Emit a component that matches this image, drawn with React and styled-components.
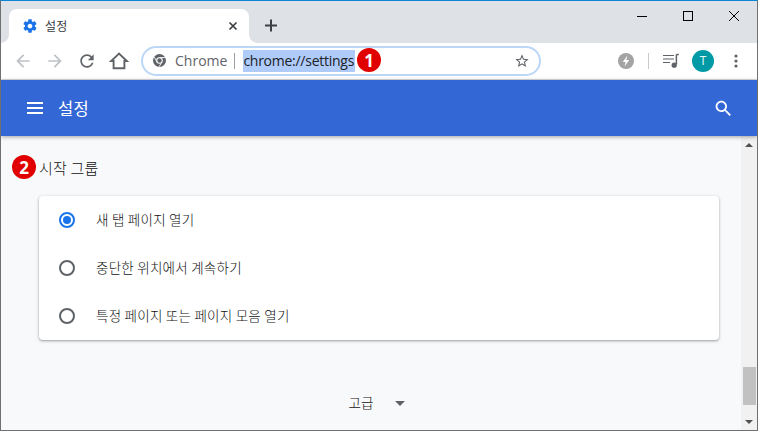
import React from 'react';
import styled, { createGlobalStyle } from 'styled-components';

const KO = `"Noto Sans CJK KR", "Noto Sans", sans-serif`;
const Global = createGlobalStyle`
  html, body { margin: 0; padding: 0; background: #f8f9fa; overflow: hidden; }
  * { box-sizing: border-box; }
`;

const Win = styled.div`
  position: relative; width: 758px; height: 431px; display: flex; flex-direction: column;
  border-top: 1px solid #0b84d8; border-left: 1px solid #707070; border-right: 1px solid #707070; border-bottom: 1px solid #707070;
  font-family: ${KO}; overflow: hidden; background: #f8f9fa;
`;
const TitleBar = styled.div`
  height: 42px; flex: none; background: #dee1e6; display: flex; align-items: flex-end; padding-left: 8px;
`;
const Tab = styled.div`
  position: relative; width: 240px; height: 34px; background: #fff; border-radius: 8px 8px 0 0;
  display: flex; align-items: center; padding: 0 11px 0 13px; color: #3c4043; font-size: 12px;
  &::before, &::after { content: ''; position: absolute; bottom: 0; width: 8px; height: 8px; }
  &::before { left: -8px; background: radial-gradient(circle at 0 0, #dee1e6 7.5px, #fff 8px); }
  &::after { right: -8px; background: radial-gradient(circle at 100% 0, #dee1e6 7.5px, #fff 8px); }
`;
const TabLabel = styled.span` margin-left: 7px; flex: 1; letter-spacing: .3px; position: relative; top: -1px; `;
const NewTab = styled.div` margin: 0 0 8px 13px; width: 18px; height: 18px; display: flex; `;
const WinControls = styled.div` margin-left: auto; align-self: flex-start; display: flex; height: 30px; align-items: center; `;
const WinBtn = styled.div` width: 46px; height: 30px; display: flex; align-items: center; justify-content: center; `;

const Toolbar = styled.div`
  height: 37px; flex: none; background: #fff; border-bottom: 1px solid #dadce0; display: flex; align-items: center; padding: 0 0 1px 6px;
`;
const NavBtn = styled.div` width: 32px; height: 32px; display: flex; align-items: center; justify-content: center; color: ${p => (p.$off ? '#bdc1c6' : '#5f6368')}; `;
const Omnibox = styled.div`
  width: 400px; height: 30px; margin-left: 6px; border: 2px solid #bcd6f7; border-radius: 15px; display: flex; align-items: center; padding: 0 9px 0 10px;
  font-family: "Open Sans", sans-serif; font-size: 14px; color: #5f6368;
`;
const Sep = styled.span` width: 1px; height: 16px; background: #9aa0a6; margin: 0 8px 0 7px; `;
const Url = styled.span` background: #aecbfa; color: #202124; height: 22px; line-height: 21px; padding: 0 1px 0 0; font-size: 14px; letter-spacing: -.26px; `;
const Chromeword = styled.span` margin-left: 9px; `;
const Grow = styled.span` flex: 1; `;
const Right = styled.div` display: flex; align-items: center; margin-left: auto; padding-right: 19px; `;
const ToolSep = styled.span` width: 1px; height: 16px; background: #c8cacd; margin: 0 14px; `;
const Avatar = styled.div`
  width: 22px; height: 22px; border-radius: 50%; background: #009aa6; color: #e6f7f8; font: 500 12px "Open Sans", sans-serif;
  display: flex; align-items: center; justify-content: center; margin: 0 20px 0 13px;
`;

const Header = styled.div`
  height: 56px; flex: none; background: #3367d6; color: #fff; display: flex; align-items: center; padding: 0 23px 0 25px; position: relative;
  box-shadow: 0 1px 4px rgba(0,0,0,.35); z-index: 2;
`;
const HeaderTitle = styled.div` font-size: 16.5px; margin-left: 14px; letter-spacing: .3px; `;

const Body = styled.div` flex: 1; display: flex; min-height: 0; `;
const Main = styled.div` flex: 1; background: #f8f9fa; padding: 19px 22px 0 38px; display: flex; flex-direction: column; `;
const Heading = styled.div` font-size: 15px; line-height: 26px; color: #111; letter-spacing: .2px; font-weight: 300; `;
const Card = styled.div`
  margin-top: 15px; height: 144px; background: #fff; border-radius: 4px;
  box-shadow: 0 1px 2px rgba(60,64,67,.35), 0 1px 3px 1px rgba(60,64,67,.12);
  display: flex; flex-direction: column;
`;
const Row = styled.div` height: 48px; display: flex; align-items: center; padding-left: 20px; font-size: 13.5px; color: #111; letter-spacing: .25px; font-weight: 300; line-height: 20px; `;
const RowText = styled.span` position: relative; top: -1px; `;
const Radio = styled.span`
  width: 16px; height: 16px; border-radius: 50%; flex: none; margin-right: 21px;
  border: 2px solid ${p => (p.$on ? '#1a73e8' : '#5f6368')};
  display: flex; align-items: center; justify-content: center;
  &::after { content: ''; width: 8px; height: 8px; border-radius: 50%; background: ${p => (p.$on ? '#1a73e8' : 'transparent')}; }
`;
const Advanced = styled.div` margin-top: 52px; display: flex; align-items: center; justify-content: center; font-size: 13.5px; font-weight: 300; color: #111; gap: 22px; padding-right: 4px; `;
const Caret = styled.span` width: 0; height: 0; border: 5px solid transparent; border-top-color: #5f6368; border-bottom: 0; margin-top: 2px; `;

const Scrollbar = styled.div` width: 16px; flex: none; background: #f1f1f1; display: flex; flex-direction: column; align-items: center; padding-top: 7px; position: relative; `;
const ArrowUp = styled.span` width: 0; height: 0; border: 4px solid transparent; border-bottom: 4px solid #505050; border-top: 0; `;
const ArrowDown = styled.span` width: 0; height: 0; border: 4px solid transparent; border-top: 4px solid #505050; border-bottom: 0; margin-top: 15px; `;
const Thumb = styled.div` width: 13px; height: 38px; background: #c1c1c1; margin-top: 220px; `;

const Badge = styled.div`
  position: absolute; width: 24px; height: 24px; border-radius: 50%; background: #e00000; color: #fff; z-index: 5;
  left: ${p => p.$x}px; top: ${p => p.$y}px; font: 700 17px "Open Sans", sans-serif; display: flex; align-items: center; justify-content: center;
`;

const Mi = ({ d, size = 20, color = 'currentColor' }) => (
  <svg width={size} height={size} viewBox="0 0 24 24" fill={color}><path d={d} /></svg>
);
const gear = 'M19.43 12.98c.04-.32.07-.64.07-.98s-.03-.66-.07-.98l2.11-1.65c.19-.15.24-.42.12-.64l-2-3.46c-.12-.22-.39-.3-.61-.22l-2.49 1c-.52-.4-1.08-.73-1.69-.98l-.38-2.65C14.46 2.18 14.25 2 14 2h-4c-.25 0-.46.18-.49.42l-.38 2.65c-.61.25-1.17.59-1.69.98l-2.49-1c-.23-.09-.49 0-.61.22l-2 3.46c-.13.22-.07.49.12.64l2.11 1.65c-.04.32-.07.65-.07.98s.03.66.07.98l-2.11 1.65c-.19.15-.24.42-.12.64l2 3.46c.12.22.39.3.61.22l2.49-1c.52.4 1.08.73 1.69.98l.38 2.65c.03.24.24.42.49.42h4c.25 0 .46-.18.49-.42l.38-2.65c.61-.25 1.17-.59 1.69-.98l2.49 1c.23.09.49 0 .61-.22l2-3.46c.12-.22.07-.49-.12-.64l-2.11-1.65zM12 15.5c-1.93 0-3.5-1.57-3.5-3.5s1.57-3.5 3.5-3.5 3.5 1.57 3.5 3.5-1.57 3.5-3.5 3.5z';
const back = 'M20 11H7.83l5.59-5.59L12 4l-8 8 8 8 1.41-1.41L7.83 13H20v-2z';
const forward = 'M12 4l-1.41 1.41L16.17 11H4v2h12.17l-5.58 5.59L12 20l8-8z';
const reload = 'M17.65 6.35C16.2 4.9 14.21 4 12 4c-4.42 0-7.99 3.58-7.99 8s3.57 8 7.99 8c3.73 0 6.84-2.55 7.73-6h-2.08c-.82 2.33-3.04 4-5.65 4-3.31 0-6-2.69-6-6s2.69-6 6-6c1.66 0 3.14.69 4.22 1.78L13 11h7V4l-2.35 2.35z';
const star = 'M22 9.24l-7.19-.62L12 2 9.19 8.63 2 9.24l5.46 4.73L5.82 21 12 17.27 18.18 21l-1.63-7.03L22 9.24zM12 15.4l-3.76 2.27 1-4.28-3.32-2.88 4.38-.38L12 6.1l1.71 4.04 4.38.38-3.32 2.88 1 4.28L12 15.4z';
const search = 'M15.5 14h-.79l-.28-.27C15.41 12.59 16 11.11 16 9.5 16 5.91 13.09 3 9.5 3S3 5.91 3 9.5 5.91 16 9.5 16c1.61 0 3.09-.59 4.23-1.57l.27.28v.79l5 4.99L20.49 19l-4.99-5zm-6 0C7.01 14 5 11.99 5 9.5S7.01 5 9.5 5 14 7.01 14 9.5 11.99 14 9.5 14z';

export default function App() {
  return (
    <Win>
      <Global />
      <TitleBar>
        <Tab>
          <Mi d={gear} size={16} color="#1a73e8" />
          <TabLabel>설정</TabLabel>
          <svg width="10" height="10" viewBox="0 0 10 10"><path d="M1.5 1.5l7 7M8.5 1.5l-7 7" stroke="#3c4043" strokeWidth="1.7" /></svg>
        </Tab>
        <NewTab>
          <svg width="18" height="18" viewBox="0 0 18 18"><path d="M9 2.5v12M3 8.5h12" stroke="#3c4043" strokeWidth="2" /></svg>
        </NewTab>
        <WinControls>
          <WinBtn><svg width="10" height="10" viewBox="0 0 10 10"><path d="M0 5.5h10" stroke="#000" /></svg></WinBtn>
          <WinBtn><svg width="10" height="10" viewBox="0 0 10 10"><rect x=".5" y=".5" width="9" height="9" fill="none" stroke="#000" /></svg></WinBtn>
          <WinBtn><svg width="10" height="10" viewBox="0 0 10 10"><path d="M0 0l10 10M10 0L0 10" stroke="#000" /></svg></WinBtn>
        </WinControls>
      </TitleBar>

      <Toolbar>
        <NavBtn $off><Mi d={back} /></NavBtn>
        <NavBtn $off><Mi d={forward} /></NavBtn>
        <NavBtn><Mi d={reload} /></NavBtn>
        <NavBtn>
          <svg width="20" height="20" viewBox="0 0 20 20"><path d="M10 2.6L2.2 10h2.4v7.2h10.8V10h2.4z" fill="none" stroke="#5f6368" strokeWidth="1.9" strokeLinejoin="miter" /></svg>
        </NavBtn>
        <Omnibox>
          <svg width="13" height="13" viewBox="0 0 16 16">
            <circle cx="8" cy="8" r="8" fill="#5f6368" />
            <circle cx="8" cy="8" r="3.4" fill="#5f6368" stroke="#fff" strokeWidth="1.3" />
            <path d="M8 4.4h7M5 9.8L1.6 3.8M11 9.8L7.4 15.8" stroke="#fff" strokeWidth="1.1" fill="none" />
          </svg>
          <Chromeword>Chrome</Chromeword>
          <Sep />
          <Url>chrome://settings</Url>
          <Grow />
          <Mi d={star} size={16} color="#5f6368" />
        </Omnibox>
        <Right>
          <svg width="16" height="16" viewBox="0 0 16 16">
            <circle cx="8" cy="8" r="8" fill="#a3a3a3" />
            <path d="M9.4 2.6L4.8 9h2.8l-1 4.4L11.2 7H8.3z" fill="#fff" />
          </svg>
          <ToolSep />
          <svg width="16" height="16" viewBox="0 0 16 16">
            <path d="M0 2.5h11M0 6h11M0 9.5h7" stroke="#5f6368" strokeWidth="1.2" />
            <path d="M13.4 1.5h2.4M13.4 1.5v10" stroke="#5f6368" strokeWidth="1.5" fill="none" />
            <circle cx="11.2" cy="12.2" r="2.6" fill="#5f6368" />
          </svg>
          <Avatar>T</Avatar>
          <svg width="4" height="14" viewBox="0 0 4 14"><g fill="#5f6368"><circle cx="2" cy="2" r="1.6" /><circle cx="2" cy="7" r="1.6" /><circle cx="2" cy="12" r="1.6" /></g></svg>
        </Right>
      </Toolbar>

      <Header>
        <svg width="18" height="14" viewBox="0 0 18 14"><path d="M1 2h16M1 7h16M1 12h16" stroke="#fff" strokeWidth="2" /></svg>
        <HeaderTitle>설정</HeaderTitle>
        <Grow />
        <Mi d={search} size={21} />
      </Header>

      <Body>
        <Main>
          <Heading>시작 그룹</Heading>
          <Card>
            <Row><Radio $on /><RowText>새 탭 페이지 열기</RowText></Row>
            <Row><Radio /><RowText>중단한 위치에서 계속하기</RowText></Row>
            <Row><Radio /><RowText>특정 페이지 또는 페이지 모음 열기</RowText></Row>
          </Card>
          <Advanced>고급<Caret /></Advanced>
        </Main>
        <Scrollbar>
          <ArrowUp />
          <Thumb />
          <ArrowDown />
        </Scrollbar>
      </Body>

      <Badge $x={356} $y={47}>1</Badge>
      <Badge $x={11} $y={154}>2</Badge>
    </Win>
  );
}
